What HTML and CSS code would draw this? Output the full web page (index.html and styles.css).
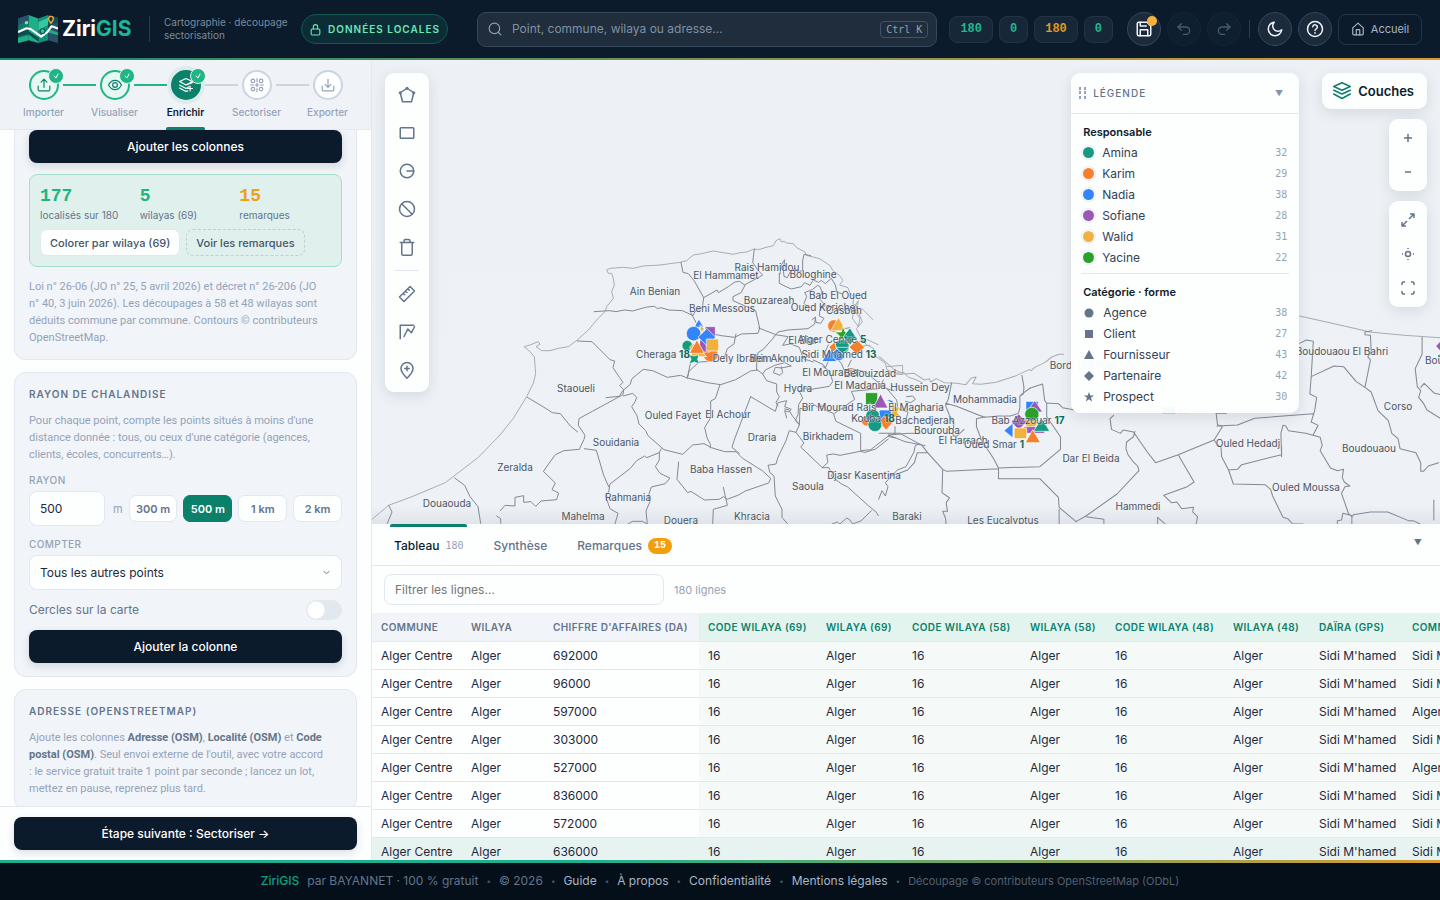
FILE: index.html
```html
<!DOCTYPE html>
<html lang="fr">
<head>
<meta charset="utf-8">
<title>ZiriGIS</title>
<link rel="stylesheet" href="styles.css">
</head>
<body>
<header class="topbar">
  <a class="brand" href="#">
    <svg class="brand-logo" viewBox="0 0 114 80" aria-hidden="true">
      <path fill="#0f7a66" d="M0 10 30 0v72L0 80z"/><path fill="#1fae8a" d="M30 0 58 10v70L30 72z"/><path fill="#12917a" d="M58 10 86 0v72L58 80z"/><path fill="#2b5269" d="M86 0l28 8v72l-28-8z"/>
      <path fill="#2b5269" d="M0 10 30 0v14L0 30z"/><path fill="#0c4d4d" d="M0 50l30-8v12L0 62zM30 46l28 18v12L30 56zM86 0l28 8v12L86 34z"/><path fill="#1fae8a" d="M0 66l30-8v14L0 80zM86 40l28 10v8L86 50z"/><path fill="#35c79f" d="M58 20l28-12v20L58 44z"/>
      <path fill="none" stroke="#fff" stroke-width="6" stroke-linecap="round" stroke-linejoin="round" d="M2 48 24 38 36 40 66 62 84 48 96 32 112 38"/>
      <circle cx="24" cy="22" r="5" fill="#7ee0c4"/><circle cx="70" cy="46" r="7" fill="#35c79f" stroke="#0c4d4d" stroke-width="3"/>
      <path fill="#14304a" stroke="#f2a93b" stroke-width="4" d="M94 24c-6-8-7-10-7-13a7 7 0 0 1 14 0c0 3-1 5-7 13z"/>
    </svg>
    <span class="brand-name">Ziri<em>GIS</em></span>
  </a>
  <p class="tagline">Cartographie · découpage<br>sectorisation</p>
  <button class="local-pill"><svg class="i13" viewBox="0 0 24 24"><rect x="4" y="11" width="16" height="11" rx="2"/><path d="M8 11V7a4 4 0 0 1 8 0v4"/></svg>DONNÉES LOCALES</button>
  <div class="search">
    <svg class="i14" viewBox="0 0 24 24"><circle cx="11" cy="11" r="9"/><path d="m18 18 4 4"/></svg>
    <input type="text" aria-label="Recherche" placeholder="Point, commune, wilaya ou adresse…">
    <kbd>Ctrl K</kbd>
  </div>
  <div class="counters"><span>180</span><span>0</span><span class="warn">180</span><span>0</span></div>
  <div class="actions">
    <button class="round" aria-label="Enregistrer"><svg class="i18" viewBox="0 0 24 24"><path d="M19 21H5a2 2 0 0 1-2-2V5a2 2 0 0 1 2-2h11l5 5v11a2 2 0 0 1-2 2z"/><path d="M17 21v-8H7v8M7 3v5h8"/></svg><i class="dot"></i></button>
    <button class="round off" aria-label="Annuler"><svg class="i16" viewBox="0 0 24 24"><path d="M8 14 3 9l5-5"/><path d="M3 9h12a5.500 5.500 0 0 1 0 11h-4"/></svg></button>
    <button class="round off" aria-label="Rétablir"><svg class="i16" viewBox="0 0 24 24"><path d="m16 14 5-5-5-5"/><path d="M21 9H9a5.500 5.500 0 0 0 0 11h4"/></svg></button>
    <span class="vsep"></span>
    <button class="round" aria-label="Mode sombre"><svg class="i18" viewBox="0 0 24 24"><path d="M21 13A9 9 0 1 1 11 3a7 7 0 0 0 10 10z"/></svg></button>
    <button class="round" aria-label="Aide"><svg class="i18" viewBox="0 0 24 24"><circle cx="12" cy="12" r="10"/><path d="M9 9a3 3 0 0 1 6 1c0 2-3 2-3 4M12 17v.5"/></svg></button>
    <a class="home" href="#"><svg class="i14" viewBox="0 0 24 24"><path d="m3 10 9-8 9 8v10a2 2 0 0 1-2 2H5a2 2 0 0 1-2-2z"/><path d="M9 22v-9h6v9"/></svg>Accueil</a>
  </div>
</header>

<div class="app">
  <aside class="side">
    <nav class="steps">
      <button class="step done"><span class="disc"><svg class="i14" viewBox="0 0 24 24"><path d="M2 14v6a2 2 0 0 0 2 2h16a2 2 0 0 0 2-2v-6M12 16V2M7 7l5-5 5 5"/></svg><i class="tick"><svg viewBox="0 0 10 10"><path d="m3 5 2 2 2-4"/></svg></i></span>Importer</button>
      <button class="step done"><span class="disc"><svg class="i14" viewBox="0 0 24 24"><path d="M1 12s4-8 11-8 11 8 11 8-4 8-11 8S1 12 1 12z"/><circle cx="12" cy="12" r="4"/></svg><i class="tick"><svg viewBox="0 0 10 10"><path d="m3 5 2 2 2-4"/></svg></i></span>Visualiser</button>
      <button class="step current"><span class="disc"><svg class="i14" viewBox="0 0 24 24"><path d="m12 1 11 5-11 6L1 6zM1 12l11 6 5-3M1 17l11 6 3-1M12 12l11-4M19 14v8M15 18h8"/></svg><i class="tick"><svg viewBox="0 0 10 10"><path d="m3 5 2 2 2-4"/></svg></i></span>Enrichir</button>
      <button class="step"><span class="disc"><svg class="i14" viewBox="0 0 24 24"><circle cx="5" cy="5" r="3"/><circle cx="19" cy="5" r="3"/><circle cx="5" cy="19" r="3"/><circle cx="19" cy="19" r="3"/><path d="M12 1v5M12 9v6M12 18v5M1 12h5M9 12h6M18 12h5"/></svg></span>Sectoriser</button>
      <button class="step"><span class="disc"><svg class="i14" viewBox="0 0 24 24"><path d="M2 14v6a2 2 0 0 0 2 2h16a2 2 0 0 0 2-2v-6M12 2v14M7 11l5 5 5-5"/></svg></span>Exporter</button>
    </nav>
    <div class="side-scroll">
      <section class="card cut">
        <button class="primary">Ajouter les colonnes</button>
        <div class="result">
          <dl class="stats"><div><dt>localisés sur 180</dt><dd>177</dd></div><div><dt>wilayas (69)</dt><dd>5</dd></div><div class="warn"><dt>remarques</dt><dd>15</dd></div></dl>
          <div class="chips"><button class="chip">Colorer par wilaya (69)</button><button class="chip dashed">Voir les remarques</button></div>
        </div>
        <p class="help">Loi n° 26-06 (JO n° 25, 5 avril 2026) et décret n° 26-206 (JO<br>n° 40, 3 juin 2026). Les découpages à 58 et 48 wilayas sont<br>déduits commune par commune. Contours © contributeurs<br>OpenStreetMap.</p>
      </section>
      <section class="card">
        <h2>RAYON DE CHALANDISE</h2>
        <p class="help">Pour chaque point, compte les points situés à moins d'une<br>distance donnée : tous, ou ceux d'une catégorie (agences,<br>clients, écoles, concurrents…).</p>
        <label class="flabel" for="radius">RAYON</label>
        <div class="radius"><input id="radius" type="text" value="500"><span>m</span><button>300 m</button><button class="on">500 m</button><button>1 km</button><button>2 km</button></div>
        <label class="flabel" for="count">COMPTER</label>
        <div class="select"><select id="count"><option>Tous les autres points</option></select><svg viewBox="0 0 10 10"><path d="m2 4 3 2 3-2"/></svg></div>
        <label class="toggle">Cercles sur la carte<input type="checkbox"></label>
        <button class="primary">Ajouter la colonne</button>
      </section>
      <section class="card">
        <h2>ADRESSE (OPENSTREETMAP)</h2>
        <p class="help">Ajoute les colonnes <b>Adresse (OSM)</b>, <b>Localité (OSM)</b> et <b>Code</b><br><b>postal (OSM)</b>. Seul envoi externe de l'outil, avec votre accord<br>: le service gratuit traite 1 point par seconde ; lancez un lot,<br>mettez en pause, reprenez plus tard.</p>
      </section>
    </div>
    <div class="side-foot"><button class="primary">Étape suivante : Sectoriser →</button></div>
  </aside>

  <main class="work">
    <section class="map">
      <svg class="map-svg" viewBox="372 60 1068 464" preserveAspectRatio="xMinYMin slice">
        <g class="borders" transform="translate(500 230) scale(.33333)">
          <path class="coast" d="M-384 868l50-42 70-26 100-42 99-76 65-67 40-50 40-65 20-40 7-30-4-50-18-20-13-10 18-5 25-10 5 8-12 7 17 12 25 0 25-7 30-5 27-20 33-30 25-30 25-25 5-15 20-25-5-20 8-20-3-20-5-15-10 0-5-10 10-5 40-3 30 3 30-7 50-3 60-8 20-5 20-17 20-3 40-9 60 10 20-5 20-2 20-8 20 0 15-5 25-6 8-15 12-6 4 10 8-2 8 5 20 2 10 12 25 13 4 10 40 10 30 20 10 16 20 15 10 14-10 14 25 8 5 14 12 14-2 20 8 5 20 50-18 20 10 20 20 28 20 10 7 24 30 22 5 20 30 10 20-3 15 15 22 7 20 10M1075 215l-10 30 15 20-5 25-18-25 5-30 12-22M1085 235l34 34M1060 340l40-12 34 16M1050 350l60-4M1160 410l48-4 0 28-18-2"/>
          <path d="M-136 744l30 22 16 34 24 30 8 50M-334 826l10 20-14 34"/>
          <path d="M543 97l6 30 16 4 18 22 28 50-4 30-22 12-6 12-10-5-22-10-40-2-24-7-10 3-10-7-20 2-10 2-35 10-25-3-25 5-20-3-46 3"/>
          <path d="M611 203l40-23 4 8 30-18 20-14 14-2 16 12-12 22-24 12v12l68 30 12 52-5 16-50 2-20 10-40-5-50-10-20-18-22-42M763 57l-5 40 16 24 14 14-10 6-43 23"/>
          <path d="M840 132l4-28 10-15-4 30 2 20 10 4 10-20 14-8 8 12 14-6 0-28 4-20 20 4M838 130v30l20 10 16 7 30-7 10-12 16 8 10-16 16 7 8-6 12 10 18-16 12 20 5 22 15 4"/>
          <path d="M914 188l24-10 15-12 7 4 6 16-8 20 18 20-16 12-2 20 14 7-10 15-14-3-2-16-10 8M916 190l4 10-8 20 14 15 0 10M946 262l-2 20-20 14-60 4-30 6-6 8-52-20M826 314l-6 10-30 34-16 10-4 24v28M826 314l38 6-16 26 24-4 26 10 12 34 30 10M772 420l-20 3-45 26-45 15-40-6-60-14-20-8-40 6-44-20-28-4-34 28-6 18-22 18-10 17-40 4M562 444l5-20 30-28 40-2M562 444l10-48M660 464l-14 42-14 7v50l-18 30 7 30 10 20v10M708 312l-6 30-20 14-8 24"/>
          <path d="M232 333l44 2 24 24 30 30 14 4-5 20 20 30 10 14-10 10 12 12-2 15-92 50-40 22-2 20 20 30-3 12-14 30-46 4-26 12-36 50 36 35-10 20 20 10-6 20-47 4-16 16-14-14-22 2v-20l-26 5v26l-30-2-14 16M-10 858l12 8 0 14"/>
          <path d="M82 502l60 36 15 10 24 3 30 37 22 18M370 498l28-8 12 12-5 14-10 14 16 27 6 25 20 20 7 15 48 42 56 14 30-28 34-4 22 12 40 12 34 0 20 20 60 38 24 22-6 14-70 24-20 12-35 13-10-8-14 8-44 2-40-26-10 4-32-40 5-52M484 656l-6 12-38 15-6-5-24 14-20 24-60 46-4 24-10 10 14 40 24 14-14 50M478 668v22l-12 20 14 20 30 14-14 17-42 10-10 30 6 14-12 28 4 40M326 770l-15-34-22-75-36-5M670 772l12 54-42 12-2 44M384 882l14-8 30 0 12 8"/>
          <path d="M752 500l-50 132-6 20 22 18M752 500l74 44 8-26 26-6-6 18 20 8-8 8-12-4 6 22M788 432l12 20 30 10 0 24 8 14-10 18 6 10M772 420l16 12 8-12 28-14 30-8 20 10-30 6-18-2-6 16 20 8 8-8-4-18"/>
          <path d="M898 585l2-50 16 2 20-18 16 12 20-4 8 15 20 8 8 24 74 36v52l30-3 52-40 22 5M898 583l-20-24-12-20-12-2M898 585l-10 22-20-5-10 30-24 50-6 20-24 4 6 22 12 10 4 60 20 40 0 24 20 24 20 24M888 607l24 32-10 12 65 62 20 0 6 14 10-2-10 12 30 24 20 10 60 54 26 22 6 10M967 713l17-16-4-22 20-3 20 4 60-12 15 3 32-10 38-30M1136 808l10-26 10 16 8-28-8-12 36-38 26-10 24-44 4-20 14-4M1114 842l-30 30-26 10-8-12-10-6-20 18-8-6-16 6"/>
          <path d="M898 484l20-10 10 5 60-10 10-14-8-30-22-16M898 484l10 20-12 20-2 30-8 18 12 12M940 390l30 14 6 10 10-22 18-12 20 20 10 24 20-8 44 10 22 20 40 30 22 6M1054 390l-10 20M1150 450l-12 26-84 8 10 24-60 42M1160 475l30 35 4 26 30 10-6 24M1220 500l18-2 8 10-14 10-16-4"/>
          <path d="M990 290l20 10 40-7M985 345l-14 30 20 16M1165 615l60-5 35 0M1165 615l50 20 60 12M1185 590v24"/>
        </g>
        <g class="borders" transform="matrix(.3444 0 0 .33333 900 300)">
          <path class="coast" d="M-60 170l45 40 28 12 28-2 30 20 14-4 4 10 16-10 24 12 36 2 26 4 16-20 14-3-10 20 24 2 44-6 58-20 38-18 6 3 10-10 30-15 20-16 20-8 14 0M1160 48l120 28 60 14 24 6 100 10 110 8"/>
          <path d="M150 248l-10 50-8 18 10 26 14 30-2 36 12 0 20-20M132 310l30 8 24 10 40 16 20 8 40-4 34 0 24-8 4-18 0-34 10-6 2-20-6-36M352 284l26-20 36-12 6 50 6 7 34 2 12 12 32 6 0 2M426 310l0 40 40 60 0 38-60 52-120 4-14-28-34-54-8-20-8-22 0-24 26-6M286 506l-150 8-12-6-44-50-30 0-8 30-20 22-30 12-26 4M80 458l-16-22-64-36-60 0M286 506v30l120 0 54 56 2 30 50 44M462 628v44M124 508l-2 70 22 16-10 14 4 26-14 0 8 20 2 18M512 664l28-16 90-66 64-70-4-14-14-14-14-20-6-18 2-20 20-16 4-16M678 396l-30-6-8 10-26-12-4-32 10-10M678 396l40 60 24 32 66-24 104-44 24-40-14-6-4-34 30 0M808 464l14 26 32 56-20 14-68 26 22 22 16-2 14 20 34-4-2 14 14 14-4 22M748 672v-20l22 20M540 650l52 8 0 14"/>
          <path d="M912 420l6 10 14 12 2 28 20 40 26-2 12-14 116-30 0-24M954 510l14 42 92 2 16 14 6 20 30 64 14 4 14 16 30 0M920 378l60-3 50-20 170-14M1106 400l2 70M1106 400l6-24 8 2 8 14 50 8 42 12 6 24-6 16 30 52 20 8 18-4-4 24 6 14 16 12-14 2-10 20 20 60 10 10v38M1160 130l20-10 20 4-6 106-4 52 20 10-6 40-10 34 20 10-10 20-4 8M1194 230l66-32 28 2 36 44 26 18 18 14 20 56 30 30 10 38 18 16 6 30 46 12 14 30 0 26 8 0 14-16 30-10M1350 262l16-82-8-10 10-14-2-50-16-2 0-8 20-4M1516 112l0 50-20 44 6 54 10 12-6 20 14 18 10 20 44 28M1512 262l10-12 30 30 26 6M1316 644l50-8 50 0 60 26 14 0 20 10M1316 648l-30-8-4 20-12 2v10M1550 600l0 60"/>
        </g>
        <g class="marks" transform="translate(500 230) scale(.33333)">
          <circle class="teal" cx="562" cy="347" r="16"/><path class="blue" d="M597 268l14 24h-28z"/><path class="yellow" d="M600 286l14 10-10 10z"/><path class="violet" d="M616 290h30v30h-30z"/><circle class="orange" cx="632" cy="374" r="22"/><circle class="blue" cx="581" cy="311" r="22"/><path class="violet" d="M600 330h30v36h-30z"/><path class="blue" d="M621 296l26 26-26 26-26-26z"/><path class="yellow" d="M620 327h36v36h-36zM570 350l10-10 40 40-44 0z"/><path class="orange" d="M591 330l22 40h-44z"/><path class="teal" d="M567 374l16 4 14-4-4 14 6 14-16-6-16 6 6-14z"/>
          <circle class="orange" cx="1002" cy="288" r="19"/><path class="yellow" d="M1016 262l22 40h-44z"/><path class="green" d="M1029 290l6 16h18l-14 12 5 18-15-10-15 10 5-18-14-12h18z"/><path class="teal" d="M1050 294l18 28-18 24-20-24z"/><circle class="teal" cx="1026" cy="350" r="22"/><path class="orange" d="M1071 330l23 22-23 22-23-22z"/><path class="blue" d="M966 394l22-38 22 38z"/><circle class="blue" cx="1016" cy="374" r="18"/><path class="orange" d="M988 350l16-14 6 20-14 12z"/><path class="teal" d="M1008 352h42l-22 18z"/>
          <circle class="orange" cx="1100" cy="572" r="16"/><path class="yellow" d="M1176 510l10 22 14-2-8 18 12 12-16 0-16 10z"/><path class="green" d="M1097 488h36v36h-36z"/><path class="violet" d="M1142 492l22 42h-44z"/><path class="blue" d="M1138 540h36v36h-36z"/><circle class="teal" cx="1118" cy="558" r="21"/><path class="orange" d="M1158 554l22 22-22 24-22-24z"/><circle class="teal" cx="1125" cy="584" r="21"/><path class="blue" d="M1160 510q20-4 20 10"/>
        </g>
        <g class="marks" transform="matrix(.3444 0 0 .33333 900 300)">
          <path class="blue" d="M366 304h36v30h-36z"/><path class="violet" d="M392 302l22 34h-44z"/><circle class="yellow" cx="380" cy="364" r="20"/><circle class="green" cx="383" cy="343" r="21"/><path class="violet" d="M345 342l22 24-22 24-22-24z"/><path class="blue" d="M328 370v44l-26-22z"/><path class="violet" d="M360 380h60v20h-60z"/><path class="teal" d="M411 354l24 40h-46z"/><path class="yellow" d="M332 384h36v32h-36z"/><path class="orange" d="M386 390l22 38h-44z"/><path class="teal" d="M761 320h40v21h-40z"/><path class="yellow" d="M803 320h34v21h-34z"/><path class="violet" d="M1556 138l14-16v32z"/><path class="teal" d="M1562 164h10v8h-10z"/>
        </g>
        <g class="labels">
          <text x="655" y="295">Ain Benian</text><text x="726" y="279">El Hammamet</text><text x="767" y="271">Rais Hamidou</text><text x="813" y="278">Bologhine</text><text x="769" y="304">Bouzareah</text><text x="722" y="312">Beni Messous</text><text x="838" y="299">Bab El Oued</text><text x="823" y="311">Oued Koriche</text><text x="844" y="314">Casbah</text>
          <text x="803" y="344">El Biar</text><text x="832" y="343">Alger Centre <tspan>5</tspan></text><text x="839" y="358">Sidi Mhamed <tspan>13</tspan></text><text x="663" y="358">Cheraga <tspan>18</tspan></text><text x="742" y="362">Dely Ibrahim</text><text x="778" y="362">Ben Aknoun</text><text x="830" y="376">El Mouradia</text><text x="870" y="377">Belouizdad</text><text x="860" y="389">El Madania</text><text x="920" y="391">Hussein Dey</text><text x="798" y="392">Hydra</text><text x="576" y="392">Staoueli</text><text x="839" y="411">Bir Mourad Rais</text><text x="916" y="411">El Magharia</text><text x="873" y="422">Kouba <tspan>18</tspan></text><text x="925" y="424">Bachedjerah</text><text x="937" y="434">Bourouba</text><text x="963" y="444">El Harrach</text><text x="994" y="448">Oued Smar <tspan>1</tspan></text>
          <text x="985" y="403">Mohammadia</text><text x="1028" y="424">Bab Azzouar <tspan>17</tspan></text><text x="1083" y="369">Bordj El Kiffan</text><text x="1091" y="462">Dar El Beida</text><text x="673" y="419">Ouled Fayet</text><text x="728" y="418">El Achour</text><text x="762" y="441">Draria</text><text x="828" y="440">Birkhadem</text><text x="616" y="446">Souidania</text><text x="515" y="471">Zeralda</text><text x="721" y="473">Baba Hassen</text><text x="864" y="479">Djasr Kasentina</text><text x="808" y="490">Saoula</text><text x="628" y="501">Rahmania</text><text x="447" y="507">Douaouda</text><text x="583" y="520">Mahelma</text><text x="681" y="524">Douera</text><text x="752" y="520">Khracia</text><text x="907" y="520">Baraki</text><text x="1003" y="524">Les Eucalyptus</text><text x="1138" y="510">Hammedi</text><text x="1342" y="355">Boudouaou El Bahri</text><text x="1398" y="410">Corso</text><text x="1248" y="447">Ouled Hedadj</text><text x="1369" y="452">Boudouaou</text><text x="1306" y="491">Ouled Moussa</text><text x="1452" y="364">Boumerdes</text>
        </g>
      </svg>
      <div class="map-ui">
        <div class="tools">
          <button aria-label="Polygone"><svg class="i18" viewBox="0 0 24 24"><path d="m12 3 9 6-3 12H6L3 9z"/><g fill="currentColor" stroke="none"><circle cx="12" cy="3" r="2"/><circle cx="21" cy="9" r="2"/><circle cx="3" cy="9" r="2"/></g></svg></button>
          <button aria-label="Rectangle"><svg class="i18" viewBox="0 0 24 24"><rect x="3" y="5" width="18" height="14" rx="1"/></svg></button>
          <button aria-label="Cercle"><svg class="i18" viewBox="0 0 24 24"><circle cx="12" cy="12" r="9"/><path d="M12 12h9"/></svg></button>
          <button aria-label="Exclure"><svg class="i18" viewBox="0 0 24 24"><circle cx="12" cy="12" r="10"/><path d="m5 5 14 14"/></svg></button>
          <button aria-label="Supprimer"><svg class="i18" viewBox="0 0 24 24"><path d="M3 6h18M5 6v15a2 2 0 0 0 2 2h10a2 2 0 0 0 2-2V6M8 6V4a2 2 0 0 1 2-2h4a2 2 0 0 1 2 2v2"/></svg></button>
          <hr>
          <button aria-label="Mesurer"><svg class="i18" viewBox="0 0 24 24"><path d="M2 16 16 2l6 6L8 22zM7 11l2 2M10 8l2 2M13 5l2 2"/></svg></button>
          <button aria-label="Profil"><svg class="i18" viewBox="0 0 24 24"><path d="M3 21V3h18M8 18l5-10 5 5 4-8"/></svg></button>
          <button aria-label="Ajouter un point"><svg class="i18" viewBox="0 0 24 24"><path d="M12 23c-6-6-8-9-8-13a8 8 0 0 1 16 0c0 4-2 7-8 13zM12 7v6M9 10h6"/></svg></button>
        </div>
        <section class="legend">
          <header><svg class="grip" viewBox="0 0 7 12"><path d="M1 0v3M6 0v3M1 4v3M6 4v3M1 9v3M6 9v3"/></svg><h2>LÉGENDE</h2><button aria-label="Replier">▼</button></header>
          <h3>Responsable</h3>
          <ul>
            <li><i class="sw bg-teal"></i>Amina<b>32</b></li><li><i class="sw bg-orange"></i>Karim<b>29</b></li><li><i class="sw bg-blue"></i>Nadia<b>38</b></li><li><i class="sw bg-violet"></i>Sofiane<b>28</b></li><li><i class="sw bg-yellow"></i>Walid<b>31</b></li><li><i class="sw bg-green"></i>Yacine<b>22</b></li>
          </ul>
          <hr>
          <h3>Catégorie · forme</h3>
          <ul>
            <li><svg class="shape" viewBox="0 0 12 12"><circle cx="6" cy="6" r="4.500"/></svg>Agence<b>38</b></li>
            <li><svg class="shape" viewBox="0 0 12 12"><path d="M2 2h8v8H2z"/></svg>Client<b>27</b></li>
            <li><svg class="shape" viewBox="0 0 12 12"><path d="m6 1 5 9H1z"/></svg>Fournisseur<b>43</b></li>
            <li><svg class="shape" viewBox="0 0 12 12"><path d="m6 1 5 5-5 5-5-5z"/></svg>Partenaire<b>42</b></li>
            <li><svg class="shape" viewBox="0 0 12 12"><path d="m6 1 1.300 3.500 3.700.1-3 2.200 1.100 3.700L6 8.300 2.900 10.500 4 6.800 1 4.600l3.700-.1z"/></svg>Prospect<b>30</b></li>
          </ul>
        </section>
        <div class="map-right">
          <button class="layers"><svg class="i18" viewBox="0 0 24 24"><path d="m12 1 11 5-11 5L1 6zM1 11l11 5 11-5M1 16l11 6 11-6"/></svg>Couches</button>
          <div class="ctl"><button aria-label="Zoom avant"><svg class="i14" viewBox="0 0 14 14"><path d="M7 3v8M3 7h8"/></svg></button><button aria-label="Zoom arrière"><svg class="i14" viewBox="0 0 14 14"><path d="M4 7h6"/></svg></button></div>
          <div class="ctl"><button aria-label="Cadrer"><svg class="i14" viewBox="0 0 14 14"><path d="M8 6l5-5M9 1h4v4M6 8l-5 5M1 9v4h4"/></svg></button><button aria-label="Centrer"><svg class="i14" viewBox="0 0 14 14"><circle cx="7" cy="7" r="2.500"/><path d="M7 1v1M7 12v1M1 7h1M12 7h1"/></svg></button><button aria-label="Plein écran"><svg class="i14" viewBox="0 0 14 14"><path d="M1 4V2l1-1h2M10 1h2l1 1v2M13 10v2l-1 1h-2M4 13H2l-1-1v-2"/></svg></button></div>
        </div>
      </div>
    </section>
    <section class="panel">
      <div class="tabs"><button class="active">Tableau <small>180</small></button><button>Synthèse</button><button>Remarques <mark>15</mark></button><button class="fold" aria-label="Replier">▼</button></div>
      <div class="filter"><input type="text" aria-label="Filtrer" placeholder="Filtrer les lignes…"><span>180 lignes</span></div>
      <div class="grid">
        <table>
          <colgroup><col class="w90"><col class="w82"><col class="w155"><col class="w118"><col class="w86"><col class="w118"><col class="w85"><col class="w118"><col class="w86"><col class="w93"><col class="w118"></colgroup>
          <thead><tr><th>COMMUNE</th><th>WILAYA</th><th>CHIFFRE D'AFFAIRES (DA)</th><th>CODE WILAYA (69)</th><th>WILAYA (69)</th><th>CODE WILAYA (58)</th><th>WILAYA (58)</th><th>CODE WILAYA (48)</th><th>WILAYA (48)</th><th>DAÏRA (GPS)</th><th>COMMUNE (GPS)</th></tr></thead>
          <tbody>
            <tr><td>Alger Centre</td><td>Alger</td><td>692000</td><td>16</td><td>Alger</td><td>16</td><td>Alger</td><td>16</td><td>Alger</td><td>Sidi M'hamed</td><td>Sidi M'hamed</td></tr>
            <tr><td>Alger Centre</td><td>Alger</td><td>96000</td><td>16</td><td>Alger</td><td>16</td><td>Alger</td><td>16</td><td>Alger</td><td>Sidi M'hamed</td><td>Sidi M'hamed</td></tr>
            <tr><td>Alger Centre</td><td>Alger</td><td>597000</td><td>16</td><td>Alger</td><td>16</td><td>Alger</td><td>16</td><td>Alger</td><td>Sidi M'hamed</td><td>Alger Centre</td></tr>
            <tr><td>Alger Centre</td><td>Alger</td><td>303000</td><td>16</td><td>Alger</td><td>16</td><td>Alger</td><td>16</td><td>Alger</td><td>Sidi M'hamed</td><td>Sidi M'hamed</td></tr>
            <tr><td>Alger Centre</td><td>Alger</td><td>527000</td><td>16</td><td>Alger</td><td>16</td><td>Alger</td><td>16</td><td>Alger</td><td>Sidi M'hamed</td><td>Alger Centre</td></tr>
            <tr><td>Alger Centre</td><td>Alger</td><td>836000</td><td>16</td><td>Alger</td><td>16</td><td>Alger</td><td>16</td><td>Alger</td><td>Sidi M'hamed</td><td>Sidi M'hamed</td></tr>
            <tr><td>Alger Centre</td><td>Alger</td><td>572000</td><td>16</td><td>Alger</td><td>16</td><td>Alger</td><td>16</td><td>Alger</td><td>Sidi M'hamed</td><td>Sidi M'hamed</td></tr>
            <tr class="hl"><td>Alger Centre</td><td>Alger</td><td>636000</td><td>16</td><td>Alger</td><td>16</td><td>Alger</td><td>16</td><td>Alger</td><td>Sidi M'hamed</td><td>Sidi M'hamed</td></tr>
          </tbody>
        </table>
      </div>
    </section>
  </main>
</div>

<footer class="foot"><b>ZiriGIS</b><span>par BAYANNET · 100 % gratuit</span><i>•</i><span>© 2026</span><i>•</i><a href="#">Guide</a><i>•</i><a href="#">À propos</a><i>•</i><a href="#">Confidentialité</a><i>•</i><a href="#">Mentions légales</a><i>•</i><span class="credit">Découpage © contributeurs OpenStreetMap (ODbL)</span></footer>
</body>
</html>
```

FILE: styles.css
```css
* { box-sizing: border-box; }
body { margin: 0; height: 100vh; display: flex; flex-direction: column; overflow: hidden; font: 12px/16px Inter, "Noto Sans", sans-serif; color: #1e293b; background: #fdfefe; }
button, input, select { font: inherit; color: inherit; margin: 0; }
button { cursor: pointer; border: 0; background: none; padding: 0; white-space: nowrap; }
a { color: inherit; text-decoration: none; }
p, h2, h3, ul, dl, dd { margin: 0; padding: 0; }
svg { fill: none; stroke: currentColor; stroke-width: 2; stroke-linecap: round; stroke-linejoin: round; flex: none; }
.i13 { width: 13px; height: 13px; }
.i14 { width: 14px; height: 14px; }
.i16 { width: 16px; height: 16px; }
.i18 { width: 18px; height: 18px; }

/* Top bar */
.topbar { height: 60px; flex: none; display: flex; align-items: center; padding: 0 18px; background: #0b1b2b; border-bottom: 2px solid; border-image: linear-gradient(90deg, #17896f, #d99b34) 1; color: #8fa0b3; white-space: nowrap; }
.brand { display: flex; align-items: center; gap: 4px; width: 131px; }
.brand-logo { width: 40px; height: 28px; stroke: none; }
.brand-name { font: 700 21px/26px Inter, sans-serif; color: #fff; }
.brand-name em { font-style: normal; color: #1fb598; }
.tagline { width: 138px; margin-right: 14px; padding-left: 14px; border-left: 1px solid #2c3b4b; font-size: 10px; line-height: 13px; color: #7b8b9e; }
.local-pill { display: flex; align-items: center; justify-content: center; gap: 6px; width: 147px; height: 30px; border: 1px solid #125a50; border-radius: 15px; background: #0c2c36; color: #6ee7b7; font-size: 10px; font-weight: 600; letter-spacing: 1px; }
.search { flex: 1; height: 35px; margin: 0 12px 0 29px; display: flex; align-items: center; gap: 8px; padding: 0 8px 0 10px; border: 1px solid #35475a; border-radius: 9px; background: #1f2d3d; }
.search input { flex: 1; min-width: 0; border: 0; outline: 0; background: none; font-size: 12px; }
.search input::placeholder { color: #8090a1; }
.search kbd { border: 1px solid #435365; border-radius: 4px; padding: 0 5px; font: 10px/15px "DejaVu Sans Mono", monospace; }
.counters { display: flex; gap: 6px; margin-right: 14px; }
.counters span { padding: 0 10px; border: 1px solid #223344; border-radius: 8px; background: #162737; color: #22b893; font: 700 12px/25px "Liberation Mono", monospace; }
.counters .warn { color: #e09a1f; }
.actions { display: flex; align-items: center; gap: 6px; }
.round { position: relative; width: 34px; height: 34px; display: grid; place-items: center; border: 1px solid #34465a; border-radius: 50%; background: #1b2b3b; color: #f1f5f9; }
.round.off { border-color: #142534; background: #0e1f2f; color: #4a5a6b; }
.dot { position: absolute; top: 3px; right: 3px; width: 10px; height: 10px; border-radius: 50%; background: #f5b13d; }
.vsep { width: 1px; height: 18px; margin: 0 2px; background: #2c3b4b; }
.home { display: flex; align-items: center; justify-content: center; gap: 6px; width: 84px; height: 31px; border: 1px solid #253545; border-radius: 8px; color: #a9b6c4; font-size: 11px; }

.app { flex: 1; min-height: 0; display: flex; }

/* Sidebar */
.side { width: 372px; flex: none; display: flex; flex-direction: column; border-right: 1px solid #e2e8f0; background: #fdfefe; }
.steps { display: flex; padding: 10px 8px 0; height: 70px; border-bottom: 1px solid #e2e8f0; background: #eff3f8; }
.step { position: relative; flex: 1; display: flex; flex-direction: column; align-items: center; gap: 5px; color: #94a3b8; font-size: 10px; line-height: 14px; font-weight: 500; }
.disc { position: relative; width: 30px; height: 30px; display: grid; place-items: center; border: 2px solid #cbd5e1; border-radius: 50%; background: #fdfefe; }
.step + .step::before { content: ""; position: absolute; top: 14px; left: -16px; width: 33px; height: 2px; background: #cbd5e1; }
.step.done .disc { border-color: #1fb584; background: #e6f8f1; color: #0b806a; }
.step.done + .done::before, .step.current::before { background: #1fb584; }
.step.current { color: #0b1b2b; font-weight: 600; }
.step.current .disc { border-color: #0b806a; background: #0b806a; color: #fff; box-shadow: 0 0 0 4px #dcecec; }
.step.current::after { content: ""; position: absolute; bottom: -1px; width: 39px; height: 3px; border-radius: 2px 2px 0 0; background: #0b806a; }
.tick { position: absolute; top: -4px; right: -7px; width: 16px; height: 16px; border: 1px solid #eff3f8; border-radius: 50%; background: #1fb584; color: #fff; display: grid; place-items: center; }
.tick svg { width: 10px; height: 10px; stroke-width: 1; }
.side-scroll { flex: 1; min-height: 0; overflow: hidden; padding: 0 14px; display: flex; flex-direction: column; gap: 12px; }
.card { flex: none; padding: 14px 14px 13px; border: 1px solid #e2e8f0; border-radius: 12px; background: #f1f4f9; }
.card.cut { padding-top: 0; border-top: 0; border-radius: 0 0 12px 12px; }
.card h2 { font-size: 10px; line-height: 14px; font-weight: 600; letter-spacing: 1px; color: #64748b; margin-bottom: 11px; }
.primary { display: block; width: 100%; height: 33px; border-radius: 8px; background: #0b1b2b; color: #fff; font-weight: 500; font-size: 12px; box-shadow: 0 3px 8px rgba(15, 30, 50, .14); }
.result { margin: 11px 0; padding: 10px; border: 1px solid #a5ddcb; border-radius: 8px; background: #e0f0ed; }
.stats { display: grid; grid-template-columns: repeat(3, 1fr); gap: 8px; margin-bottom: 7px; }
.stats div { display: flex; flex-direction: column-reverse; }
.stats dt { font-size: 10px; line-height: 14px; color: #64748b; white-space: nowrap; }
.stats dd { font: 700 18px/23px "Liberation Mono", monospace; color: #1fb57f; }
.stats .warn dd { color: #eda01c; }
.chips { display: flex; gap: 6px; }
.chip { height: 27px; padding: 0 9px; border: 1px solid #e2e8f0; border-radius: 7px; background: #fdfefe; color: #475569; font-size: 11px; font-weight: 500; }
.chip.dashed { border: 1px dashed #c0cfd2; background: none; }
.help { font: 11px/17px Roboto, Inter, sans-serif; color: #94a3b8; white-space: nowrap; }
.help b { color: #64748b; font-weight: 700; }
.flabel { display: block; margin: 10px 0 4px; font-size: 10px; line-height: 14px; font-weight: 500; color: #94a3b8; letter-spacing: 0.04em; }
.radius { display: flex; align-items: center; gap: 6px; margin-bottom: 11px; color: #94a3b8; font-size: 11px; }
.radius input { width: 76px; height: 35px; margin-right: 2px; padding: 0 10px; border: 1px solid #e2e8f0; border-radius: 8px; background: #fdfefe; color: #1e293b; font-size: 12px; }
.radius button { flex: 1; height: 27px; border: 1px solid #e2e8f0; border-radius: 7px; background: #fdfefe; color: #64748b; font-weight: 600; }
.radius .on { background: #0b806a; border-color: #0b806a; color: #fff; }
.select { position: relative; }
.select select { display: block; width: 100%; height: 35px; padding: 0 10px; appearance: none; border: 1px solid #e2e8f0; border-radius: 8px; background: #fdfefe; font-size: 12px; }
.select svg { position: absolute; right: 11px; top: 13px; width: 9px; height: 9px; stroke-width: 1; color: #64748b; }
.toggle { display: flex; align-items: center; justify-content: space-between; height: 20px; margin: 10px 0; color: #64748b; font-size: 12px; }
.toggle input { appearance: none; width: 36px; height: 20px; border-radius: 10px; background: radial-gradient(circle at 10px 10px, #fff 8px, transparent 9px) #e2e8f0; }
.side-foot { padding: 10px 14px; border-top: 1px solid #e2e8f0; }

/* Map */
.work { flex: 1; min-width: 0; display: flex; flex-direction: column; }
.map { position: relative; flex: 1; min-height: 0; overflow: hidden; background: linear-gradient(#edf1f5, #eef2f6 96%, #dfe4ea); }
.map-svg { position: absolute; inset: 0; width: 100%; height: 100%; stroke: none; }
.borders { stroke: #838995; stroke-width: 3; fill: none; }
.coast { stroke: #a7adb7; }
.marks { stroke: #fff; stroke-width: 2; stroke-linejoin: miter; }
.labels { font-size: 10px; fill: #4b5563; text-anchor: middle; paint-order: stroke; stroke: rgba(240, 244, 248, .6); stroke-width: 1px; }
.labels tspan { font-weight: 700; fill: #0b6b58; }
.teal { fill: #149b82; } .orange { fill: #f5812f; } .blue { fill: #3385ff; } .violet { fill: #9b59b6; } .yellow { fill: #f2b13c; } .green { fill: #2ca02c; }
.bg-teal { background: #149b82; } .bg-orange { background: #f5812f; } .bg-blue { background: #3385ff; } .bg-violet { background: #9b59b6; } .bg-yellow { background: #f2b13c; } .bg-green { background: #2ca02c; }
.map-ui { position: absolute; inset: 13px; display: flex; align-items: flex-start; gap: 23px; }
.tools, .ctl, .layers, .legend { background: #fdfefe; border-radius: 9px; box-shadow: 0 4px 14px rgba(30, 50, 80, .12); }
.tools { display: flex; flex-direction: column; gap: 4px; width: 44px; padding: 5px; color: #64748b; margin-right: auto; }
.tools button { height: 34px; display: grid; place-items: center; }
.tools hr { width: 24px; margin: 2px auto; border: 0; border-top: 1px solid #e2e8f0; }
.legend { width: 228px; padding-bottom: 6px; color: #1e293b; background: rgba(253, 254, 254, .97); }
.legend header { display: flex; align-items: center; gap: 7px; height: 41px; padding: 0 16px 0 8px; border-bottom: 1px solid #e2e8f0; color: #64748b; }
.grip { width: 7px; height: 12px; stroke: #94a3b8; stroke-linecap: butt; }
.legend h2 { flex: 1; font-size: 10px; font-weight: 500; letter-spacing: 1px; }
.legend header button { font-size: 8px; color: #8593ad; }
.legend h3 { font-size: 11px; line-height: 18px; font-weight: 600; color: #0b1b2b; padding: 0 12px; margin-top: 9px; }
.legend ul { list-style: none; padding: 0 12px; margin-top: 1px; }
.legend li { display: flex; align-items: center; gap: 8px; height: 21px; font-size: 12px; color: #334155; }
.legend li b { margin-left: auto; font: 10px/16px "DejaVu Sans Mono", monospace; color: #94a3b8; }
.sw { width: 11px; height: 11px; border-radius: 50%; box-shadow: 0 0 0 1px #fff, 0 0 0 2px #e8ecf1; }
.shape { width: 12px; height: 12px; fill: #64748b; stroke: none; }
.legend hr { margin: 5px 10px 8px; border: 0; border-top: 1px solid #e2e8f0; }
.map-right { display: flex; flex-direction: column; align-items: flex-end; gap: 10px; }
.layers { display: flex; align-items: center; gap: 7px; height: 36px; padding: 0 13px 0 11px; color: #0b1b2b; font-size: 13px; font-weight: 600; }
.layers svg { color: #0b806a; }
.ctl { width: 38px; padding: 2px 0; color: #64748b; }
.ctl svg { stroke-width: 1.5; stroke-linecap: butt; }
.ctl button { display: grid; place-items: center; width: 38px; height: 34px; }

/* Data panel */
.panel { height: 336px; flex: none; display: flex; flex-direction: column; background: #fdfefe; min-width: 0; }
.tabs { display: flex; height: 42px; flex: none; padding: 0 18px; gap: 22px; border-bottom: 1px solid #e2e8f0; color: #64748b; }
.tabs button { display: flex; align-items: center; gap: 6px; padding: 0 4px 0; font-size: 12px; font-weight: 500; border-top: 3px solid transparent; }
.tabs .active { border-top-color: #0b806a; border-radius: 2px; color: #0b1b2b; }
.tabs small { font: 10px/14px "DejaVu Sans Mono", monospace; color: #94a3b8; }
.tabs mark { padding: 0 6px; border-radius: 8px; background: #f59e0b; color: #fff; font: 700 10px/16px "Liberation Mono", monospace; }
.tabs .fold { margin-left: auto; padding: 0; font-size: 8px; line-height: 30px; align-self: flex-start; color: #64748b; }
.filter { display: flex; align-items: center; gap: 10px; height: 47px; flex: none; padding: 0 12px; color: #94a3b8; font-size: 11px; }
.filter input { width: 280px; height: 31px; padding: 0 10px; border: 1px solid #e2e8f0; border-radius: 8px; background: #fdfefe; font-size: 12px; }
.filter input::placeholder { color: #757575; }
.grid { flex: 1; min-height: 0; overflow: hidden; }
table { table-layout: fixed; width: 1149px; border-collapse: separate; border-spacing: 0; }
.w90 { width: 90px; } .w82 { width: 82px; } .w155 { width: 155px; } .w118 { width: 118px; } .w86 { width: 86px; } .w85 { width: 85px; } .w93 { width: 93px; }
th, td { height: 28px; padding: 0 0 0 9px; text-align: left; white-space: nowrap; border-bottom: 1px solid #e2e8f0; }
th { height: 29px; font-size: 10px; font-weight: 600; letter-spacing: 0.04em; color: #64748b; background: #f1f5f9; }
td { font-size: 12px; color: #1e293b; }
th:nth-child(n+4) { background: #e3f4ef; color: #0b806a; }
td:nth-child(n+4) { background: #f5faf9; }
.hl td, .hl td:nth-child(n+4) { background: #e7f3f1; }

/* Footer */
.foot { height: 40px; flex: none; display: flex; align-items: center; justify-content: center; gap: 8px; padding-bottom: 2px; background: #050f1a; border-top: 3px solid; border-image: linear-gradient(90deg, #1fae8f 20%, #1fae8f 40%, #d99b34) 1; color: #64748b; font-size: 12px; white-space: nowrap; }
.foot b { font-weight: 500; color: #12a083; }
.foot i { font-style: normal; font-size: 8px; color: #475569; }
.foot a { color: #a9b6c4; }
.foot .credit { font-size: 11px; color: #55606e; }
```
